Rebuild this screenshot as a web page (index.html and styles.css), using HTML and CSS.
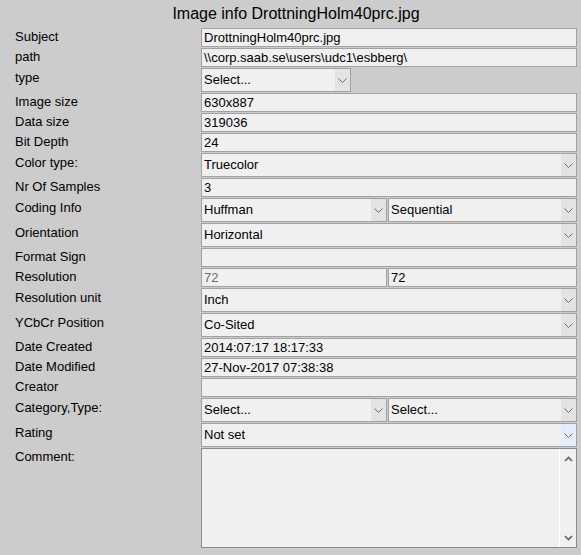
FILE: index.html
```html
<!DOCTYPE html>
<html>
<head>
<meta charset="utf-8">
<title>Image info</title>
<link rel="stylesheet" href="styles.css">
</head>
<body>
<div class="dialog">
  <h1 class="title">Image info DrottningHolm40prc.jpg</h1>
  <div class="form">
    <div class="label">Subject</div>
    <div class="field"><div class="inp">DrottningHolm40prc.jpg</div></div>

    <div class="label">path</div>
    <div class="field"><div class="inp">\\corp.saab.se\users\udc1\esbberg\</div></div>

    <div class="label sl">type</div>
    <div class="field"><div class="sel narrow"><span class="txt">Select...</span><span class="arr"><svg width="9" height="5" viewBox="0 0 9 5"><path d="M0.5 0.5 L4.5 4.5 L8.5 0.5" fill="none" stroke="#6a6a6a" stroke-width="1"/></svg></span></div></div>

    <div class="label">Image size</div>
    <div class="field"><div class="inp">630x887</div></div>

    <div class="label">Data size</div>
    <div class="field"><div class="inp">319036</div></div>

    <div class="label">Bit Depth</div>
    <div class="field"><div class="inp">24</div></div>

    <div class="label sl">Color type:</div>
    <div class="field"><div class="sel"><span class="txt">Truecolor</span><span class="arr"><svg width="9" height="5" viewBox="0 0 9 5"><path d="M0.5 0.5 L4.5 4.5 L8.5 0.5" fill="none" stroke="#6a6a6a" stroke-width="1"/></svg></span></div></div>

    <div class="label">Nr Of Samples</div>
    <div class="field"><div class="inp">3</div></div>

    <div class="label sl">Coding Info</div>
    <div class="field pair">
      <div class="sel"><span class="txt">Huffman</span><span class="arr"><svg width="9" height="5" viewBox="0 0 9 5"><path d="M0.5 0.5 L4.5 4.5 L8.5 0.5" fill="none" stroke="#6a6a6a" stroke-width="1"/></svg></span></div>
      <div class="sel"><span class="txt">Sequential</span><span class="arr"><svg width="9" height="5" viewBox="0 0 9 5"><path d="M0.5 0.5 L4.5 4.5 L8.5 0.5" fill="none" stroke="#6a6a6a" stroke-width="1"/></svg></span></div>
    </div>

    <div class="label sl">Orientation</div>
    <div class="field"><div class="sel"><span class="txt">Horizontal</span><span class="arr"><svg width="9" height="5" viewBox="0 0 9 5"><path d="M0.5 0.5 L4.5 4.5 L8.5 0.5" fill="none" stroke="#6a6a6a" stroke-width="1"/></svg></span></div></div>

    <div class="label">Format Sign</div>
    <div class="field"><div class="inp"></div></div>

    <div class="label">Resolution</div>
    <div class="field pair">
      <div class="inp disabled">72</div>
      <div class="inp">72</div>
    </div>

    <div class="label sl">Resolution unit</div>
    <div class="field"><div class="sel"><span class="txt">Inch</span><span class="arr"><svg width="9" height="5" viewBox="0 0 9 5"><path d="M0.5 0.5 L4.5 4.5 L8.5 0.5" fill="none" stroke="#6a6a6a" stroke-width="1"/></svg></span></div></div>

    <div class="label sl">YCbCr Position</div>
    <div class="field"><div class="sel"><span class="txt">Co-Sited</span><span class="arr"><svg width="9" height="5" viewBox="0 0 9 5"><path d="M0.5 0.5 L4.5 4.5 L8.5 0.5" fill="none" stroke="#6a6a6a" stroke-width="1"/></svg></span></div></div>

    <div class="label">Date Created</div>
    <div class="field"><div class="inp">2014:07:17 18:17:33</div></div>

    <div class="label">Date Modified</div>
    <div class="field"><div class="inp">27-Nov-2017 07:38:38</div></div>

    <div class="label">Creator</div>
    <div class="field"><div class="inp"></div></div>

    <div class="label sl">Category,Type:</div>
    <div class="field pair">
      <div class="sel"><span class="txt">Select...</span><span class="arr"><svg width="9" height="5" viewBox="0 0 9 5"><path d="M0.5 0.5 L4.5 4.5 L8.5 0.5" fill="none" stroke="#6a6a6a" stroke-width="1"/></svg></span></div>
      <div class="sel"><span class="txt">Select...</span><span class="arr"><svg width="9" height="5" viewBox="0 0 9 5"><path d="M0.5 0.5 L4.5 4.5 L8.5 0.5" fill="none" stroke="#6a6a6a" stroke-width="1"/></svg></span></div>
    </div>

    <div class="label sl">Rating</div>
    <div class="field"><div class="sel hover"><span class="txt">Not set</span><span class="arr"><svg width="9" height="5" viewBox="0 0 9 5"><path d="M0.5 0.5 L4.5 4.5 L8.5 0.5" fill="none" stroke="#6a6a6a" stroke-width="1"/></svg></span></div></div>

    <div class="label">Comment:</div>
    <div class="field">
      <div class="memo">
        <div class="memo-body"></div>
        <div class="scroll">
          <svg width="9" height="6" viewBox="0 0 9 6"><path d="M1 5 L4.5 1.5 L8 5" fill="none" stroke="#606060" stroke-width="1.6"/></svg>
          <svg width="9" height="6" viewBox="0 0 9 6"><path d="M1 1 L4.5 4.5 L8 1" fill="none" stroke="#606060" stroke-width="1.6"/></svg>
        </div>
      </div>
    </div>
  </div>
</div>
</body>
</html>
```

FILE: styles.css
```css
html, body {
  margin: 0;
  padding: 0;
  background: #cccccc;
}

.dialog {
  width: 581px;
  height: 555px;
  font-family: "Liberation Sans", Arial, sans-serif;
  color: #000;
}

.title {
  margin: 0;
  padding: 5px 0 0 11px;
  height: 23px;
  font-size: 16px;
  font-weight: normal;
  line-height: 18px;
  text-align: center;
}

.form {
  display: grid;
  grid-template-columns: 201px 376px;
  row-gap: 1px;
}

.label {
  padding-left: 15px;
  font-size: 13px;
  line-height: 15px;
  padding-top: 1px;
}

.label.sl {
  padding-top: 2px;
}

.field {
  display: flex;
}

.field.pair {
  display: grid;
  grid-template-columns: 186px 189px;
  column-gap: 1px;
}

.inp {
  box-sizing: border-box;
  width: 100%;
  height: 19px;
  border: 1px solid #a2a2a2;
  background: #f0f0f0;
  font-size: 13px;
  line-height: 17px;
  padding-left: 2px;
  white-space: nowrap;
  overflow: hidden;
}

.inp.disabled {
  color: #6d6d6d;
}

.sel {
  box-sizing: border-box;
  width: 100%;
  height: 24px;
  border: 1px solid #a2a2a2;
  background: #f0f0f0;
  display: flex;
  font-size: 13px;
}

.sel.narrow {
  width: 150px;
}

.sel .txt {
  flex: 1;
  padding-left: 2px;
  line-height: 22px;
  white-space: nowrap;
  overflow: hidden;
}

.sel .arr {
  width: 15px;
  background: #e3e3e3;
  display: flex;
  align-items: center;
  justify-content: center;
}

.sel.hover .arr {
  background: #e2eefa;
}

.memo {
  box-sizing: border-box;
  width: 100%;
  height: 100px;
  border: 1px solid #8c8c8c;
  background: #f0f0f0;
  display: flex;
}

.memo-body {
  flex: 1;
}

.scroll {
  width: 16px;
  border-left: 1px solid #ffffff;
  display: flex;
  flex-direction: column;
  justify-content: space-between;
  align-items: center;
  padding: 7px 0 6px;
}
```
